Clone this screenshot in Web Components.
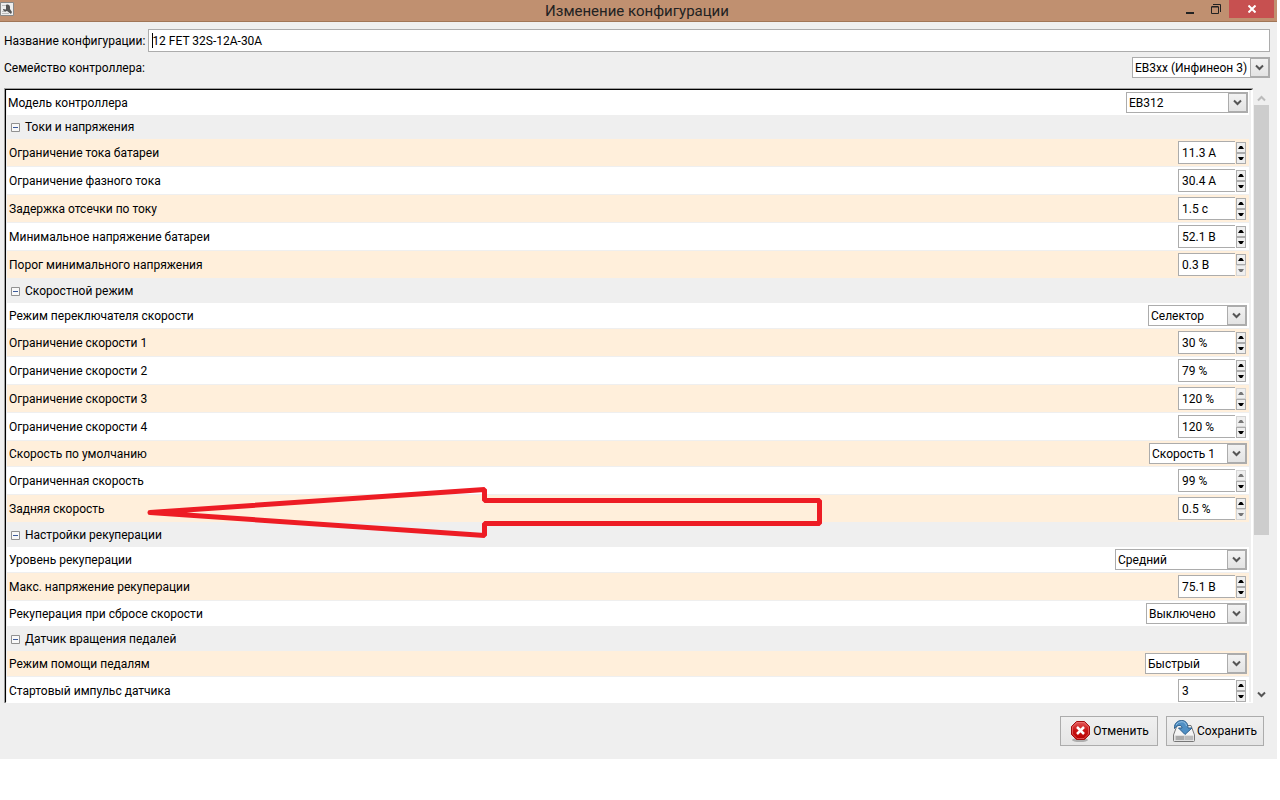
<!DOCTYPE html>
<html lang="ru">
<head>
<meta charset="utf-8">
<title>Изменение конфигурации</title>
<style>
  body {margin: 0; background: #fff; font: 12px/16px "Segoe UI", Roboto, "Open Sans", sans-serif; color: #000;}
</style>
</head>
<body>

<config-dialog caption="Изменение конфигурации">
  <text-field slot="head" value="12 FET 32S-12A-30A">Название конфигурации:</text-field>
  <combo-field slot="head" value="EB3xx (Инфинеон 3)" size="138">Семейство контроллера:</combo-field>

  <setting-list>
    <combo-field row first value="EB312" size="122">Модель контроллера</combo-field>

    <setting-group caption="Токи и напряжения">
      <spin-field tint value="11.3 А">Ограничение тока батареи</spin-field>
      <spin-field value="30.4 А">Ограничение фазного тока</spin-field>
      <spin-field tint value="1.5 с">Задержка отсечки по току</spin-field>
      <spin-field value="52.1 В">Минимальное напряжение батареи</spin-field>
      <spin-field tint value="0.3 В" limit="min">Порог минимального напряжения</spin-field>
    </setting-group>

    <setting-group caption="Скоростной режим">
      <combo-field row value="Селектор" size="99">Режим переключателя скорости</combo-field>
      <spin-field tint value="30 %">Ограничение скорости 1</spin-field>
      <spin-field value="79 %">Ограничение скорости 2</spin-field>
      <spin-field tint value="120 %" limit="max">Ограничение скорости 3</spin-field>
      <spin-field value="120 %" limit="max">Ограничение скорости 4</spin-field>
      <combo-field row tint value="Скорость 1" size="98">Скорость по умолчанию</combo-field>
      <spin-field value="99 %" limit="max">Ограниченная скорость</spin-field>
      <spin-field tint value="0.5 %" limit="min">Задняя скорость</spin-field>
    </setting-group>

    <setting-group caption="Настройки рекуперации">
      <combo-field row value="Средний" size="132">Уровень рекуперации</combo-field>
      <spin-field tint value="75.1 В">Макс. напряжение рекуперации</spin-field>
      <combo-field row value="Выключено" size="101">Рекуперация при сбросе скорости</combo-field>
    </setting-group>

    <setting-group caption="Датчик вращения педалей">
      <combo-field row tint value="Быстрый" size="102">Режим помощи педалям</combo-field>
      <spin-field value="3">Стартовый импульс датчика</spin-field>
    </setting-group>
  </setting-list>

  <icon-button slot="actions">
    <svg slot="icon" width="22" height="22" viewBox="0 0 22 22" aria-hidden="true">
      <defs>
        <linearGradient id="stop" x2="0" y2="1">
          <stop offset="0" stop-color="#e45a5a"/><stop offset=".5" stop-color="#c81414"/><stop offset="1" stop-color="#b80000"/>
        </linearGradient>
      </defs>
      <ellipse cx="11" cy="20" rx="8" ry="2" fill="#888" opacity=".6"/>
      <path d="M7.500 1.500h8l5 5v8l-5 5h-8l-5-5v-8z" fill="url(#stop)" stroke="#a01010"/>
      <path d="M8 2.500h7l4.500 4.500v7L15 18.500H8L3.500 14V7z" fill="none" stroke="#f08080" opacity=".6"/>
      <path d="M8 7l7 7M15 7l-7 7" stroke="#fff" stroke-width="2.500"/>
    </svg>
    Отменить
  </icon-button>
  <icon-button slot="actions">
    <svg slot="icon" width="22" height="22" viewBox="0 0 22 22" aria-hidden="true">
      <path d="M4 5.500h14L21.500 15v5.500q0 1-1 1h-19q-1 0-1-1V15z" fill="#f4f4f4" stroke="#777"/>
      <path d="M1.500 15.500h19v5h-19z" fill="#ccc"/>
      <path d="M4 16v4M6 16v4M8 16v4M10 16v4" stroke="#888"/>
      <path d="M13 16v4M15 16v4M17 16v4M19 16v4" stroke="#aaa"/>
      <path d="M1.500 8.500C1 3 5 .5 8.500.5c4 0 6.500 2.500 6.500 7.500h4L12 14.500 5.500 8H9c0-3-4-4-7.500.5z" fill="#4f8fc4" stroke="#2c5f8c"/>
      <path d="M3 5q2-3.500 6-3.300c2.500.2 4 2 4.500 4.300" fill="none" stroke="#93bfe2"/>
    </svg>
    Сохранить
  </icon-button>

  <red-arrow slot="note"></red-arrow>
</config-dialog>

<script>
// Small helper: attach an open root and fill it.
const render = (el, html) => {
  const root = el.attachShadow({mode: "open"});
  root.innerHTML = `<style>:host, * {box-sizing: border-box;} * {margin: 0; font: inherit; color: inherit;}</style>${html}`;
  return root;
};

// Shared look of a labelled line, in the list or above it.
const rowStyle = `
  :host {display: flex; align-items: center; justify-content: space-between;}
  :host([row]) {height: 26px; padding: 0 2px; background: #fff; border-bottom: 1px solid #efefef;}
  :host([first]) {height: 25px; padding: 0 1px; border-bottom: 0;}
  label {white-space: nowrap;}
`;
const tintStyle = ":host([tint]) {background: #ffefdb;}";

// Window with a title bar, a head, a body and buttons:
class ConfigDialog extends HTMLElement {
  connectedCallback() {
    render(this, `
      <style>
      :host {display: flex; flex-direction: column; position: relative; height: calc(100vh - 41px); margin-right: 3px; background: #efefef;}
      header {display: flex; justify-content: space-between; height: 22px; padding-right: 3px; background: #c09070; border-bottom: 1px solid #a17657;}
      header > * {flex: 1;}
      .app {width: 14px; height: 14px; margin-top: 2px; display: block;}
      h1 {flex: none; font-size: 15px; line-height: 22px; color: #222;}
      nav {display: flex; justify-content: flex-end; align-items: start;}
      nav button {display: flex; align-items: center; justify-content: center; width: 26px; height: 18px; padding: 0; border: 0; background: none;}
      nav .close {width: 45px; background: #c75050;}
      .head {display: grid; gap: 5px; padding: 7px 7px 10px 4px;}
      main {flex: 1; min-height: 0; display: flex; padding: 0 7px 0 4px;}
      footer {display: flex; justify-content: flex-end; gap: 8px; padding: 13px;}
      </style>
      <header>
        <div>
          <svg class="app" viewBox="0 0 14 14" aria-hidden="true">
            <path d="M.5.500h13v13H.5z" fill="#eee" stroke="#888"/>
            <path d="M2 3.500h4M2 9.500h4M2 11.500h7" stroke="#bbb"/>
            <path d="M6 3c2-1 4 0 4 2v2l2 3-1 2-4-3c-2 1-4 0-4-2l3 .5z" fill="#555"/>
          </svg>
        </div>
        <h1>${this.getAttribute("caption")}</h1>
        <nav>
          <button aria-label="Свернуть"><svg width="10" height="10"><path d="M1 8h8v2H1z" fill="#222"/></svg></button>
          <button aria-label="Развернуть"><svg width="10" height="10"><path d="M.5 3h7v6.500h-7zM.5 2.500h7M2 .5h7.500V8" fill="none" stroke="#222"/></svg></button>
          <button class="close" aria-label="Закрыть"><svg width="8" height="8"><path d="M.5.500l7 7M7.500.500l-7 7" stroke="#fff" stroke-width="2"/></svg></button>
        </nav>
      </header>
      <div class="head"><slot name="head"></slot></div>
      <main><slot></slot></main>
      <footer><slot name="actions"></slot></footer>
      <slot name="note"></slot>
    `);
  }
}

// Sunken list with its scroll bar:
class SettingList extends HTMLElement {
  connectedCallback() {
    render(this, `
      <style>
      :host {flex: 1; display: flex; min-height: 0;}
      .frame {flex: 1; display: flex; border: solid #a0a0a0; border-width: 1px 0 0 1px;}
      .view {flex: 1; overflow: hidden; padding: 0 2px 0 1px; border: solid; border-color: #000 #fff #fff #000; border-width: 1px 2px 1px 1px;}
      .bar {width: 17px; display: flex; flex-direction: column; padding: 3px 1px 2px;}
      .bar button {display: flex; align-items: center; justify-content: center; height: 14px; padding: 0; border: 0; background: none;}
      .track {flex: 1; display: flex; flex-direction: column;}
      .thumb {flex: 430; background: #cdcdcd;}
      .rest {flex: 152;}
      </style>
      <div class="frame"><div class="view"><slot></slot></div></div>
      <div class="bar">
        <button aria-label="Вверх" disabled><svg width="9" height="7"><path d="M1 5.500L4.500 2 8 5.500" fill="none" stroke="#bbb" stroke-width="2"/></svg></button>
        <div class="track"><div class="thumb"></div><div class="rest"></div></div>
        <button aria-label="Вниз"><svg width="9" height="7"><path d="M1 1.500L4.500 5 8 1.500" fill="none" stroke="#555" stroke-width="2"/></svg></button>
      </div>
    `);
  }
}

// Collapsible group of rows:
class SettingGroup extends HTMLElement {
  connectedCallback() {
    const root = render(this, `
      <style>
      :host {display: block;}
      button {display: flex; align-items: center; gap: 5px; width: 100%; height: 24px; padding: 0 4px; border: 0; background: #efefef;}
      </style>
      <button aria-expanded="true">
        <svg width="9" height="9" aria-hidden="true"><path d="M.5.500h8v8h-8z" fill="#f8f8f8" stroke="#919191"/><path d="M2 4.500h5" stroke="#3c5a9a"/></svg>
        ${this.getAttribute("caption")}
      </button>
      <div><slot></slot></div>
    `);
    const button = root.querySelector("button");
    button.addEventListener("click", _ => {
      const body = root.querySelector("div");
      body.hidden = !body.hidden;
      button.setAttribute("aria-expanded", !body.hidden);
    });
  }
}

class TextField extends HTMLElement {
  connectedCallback() {
    // The gradient is the text cursor, standing before the first letter.
    render(this, `
      <style>
      ${rowStyle}
      :host {gap: 3px;}
      input {flex: 1; height: 23px; padding: 0 3px; border: 1px solid #acacac; background: linear-gradient(#000, #000) 3px 3px/1px 15px no-repeat #fff;}
      </style>
      <label for="input"><slot></slot></label>
      <input id="input" value="${this.getAttribute("value")}">
    `);
  }
}

class ComboField extends HTMLElement {
  connectedCallback() {
    render(this, `
      <style>
      ${rowStyle}
      ${tintStyle}
      .combo {display: grid; grid-template-columns: 1fr 19px; width: ${this.getAttribute("size")}px; height: 21px; border: 1px solid #acacac; background: #fff;}
      select {grid-area: 1 / 1 / 2 / 3; appearance: none; padding: 0 2px; border: 0; background: none;}
      svg {grid-area: 1 / 2; width: 19px; height: 19px; border: 1px solid #acacac; background: linear-gradient(#f2f2f2, #e3e3e3); pointer-events: none;}
      </style>
      <label for="select"><slot></slot></label>
      <span class="combo">
        <select id="select"><option>${this.getAttribute("value")}</option></select>
        <svg viewBox="0 0 17 17" aria-hidden="true"><path d="M5 6.500l3.500 3.500L12 6.500" fill="none" stroke="#555" stroke-width="2"/></svg>
      </span>
    `);
  }
}

class SpinField extends HTMLElement {
  connectedCallback() {
    const limit = this.getAttribute("limit");
    render(this, `
      <style>
      ${rowStyle}
      :host {height: 28px; padding: 0 3px 0 2px; background: #fff; border-bottom: 1px solid #efefef;}
      ${tintStyle}
      .spin {display: flex; align-items: center; gap: 1px;}
      input {width: 57px; height: 23px; padding: 0 3px; border: 1px solid #acacac; border-right: 0; background: #fff;}
      .steps {display: grid;}
      button {display: flex; align-items: center; justify-content: center; width: 10px; height: 11px; padding: 0; border: 1px solid #acacac; background: #efefef;}
      button:disabled {border-color: #d5d5d5;}
      button:disabled svg {fill: #777;}
      </style>
      <label for="input"><slot></slot></label>
      <span class="spin">
        <input id="input" value="${this.getAttribute("value")}">
        <span class="steps">
          <button aria-label="Больше" ${limit === "max" ? "disabled" : ""}><svg width="6" height="3"><path d="M0 3l2-3h2l2 3z"/></svg></button>
          <button aria-label="Меньше" ${limit === "min" ? "disabled" : ""}><svg width="6" height="3"><path d="M0 0l2 3h2l2-3z"/></svg></button>
        </span>
      </span>
    `);
  }
}

class IconButton extends HTMLElement {
  connectedCallback() {
    render(this, `
      <style>
      :host {display: block;}
      button {display: flex; align-items: center; justify-content: center; gap: 2px; width: 98px; height: 30px; padding: 0; border: 1px solid #acacac; background: linear-gradient(#f0f0f0, #e5e5e5);}
      </style>
      <button><slot name="icon"></slot><span><slot></slot></span></button>
    `);
  }
}

// Hand-drawn pointer lying over the list:
class RedArrow extends HTMLElement {
  connectedCallback() {
    render(this, `
      <style>
      :host {position: absolute; left: 147px; top: 486px; pointer-events: none;}
      svg {display: block;}
      </style>
      <svg width="676" height="52" aria-hidden="true">
        <path d="M3 26.500L337.500 3.500V14.500H672.500V37.500H337.500V49.500L3 26.500" fill="none" stroke="#ed1c24" stroke-width="5" stroke-linejoin="bevel" stroke-linecap="round"/>
      </svg>
    `);
  }
}

customElements.define("config-dialog", ConfigDialog);
customElements.define("setting-list", SettingList);
customElements.define("setting-group", SettingGroup);
customElements.define("text-field", TextField);
customElements.define("combo-field", ComboField);
customElements.define("spin-field", SpinField);
customElements.define("icon-button", IconButton);
customElements.define("red-arrow", RedArrow);
</script>
</body>
</html>
